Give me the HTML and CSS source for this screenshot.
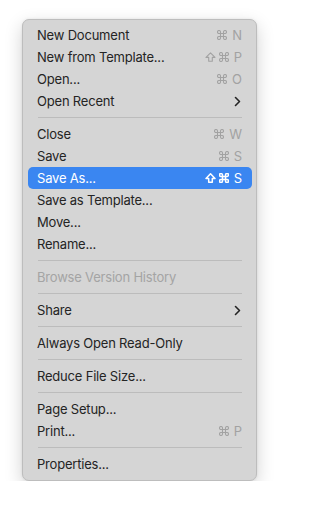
FILE: index.html
```html
<!DOCTYPE html>
<html lang="en">
<head>
<meta charset="utf-8">
<title>File menu</title>
<link rel="stylesheet" href="styles.css">
</head>
<body>
<div class="menu">
  <div class="item"><span class="label">New Document</span><span class="keys"><svg class="cmd" viewBox="0 0 10 10"><path d="M3.5 3.5 V2 A1.5 1.5 0 1 0 2 3.5 H8 A1.5 1.5 0 1 0 6.5 2 V8 A1.5 1.5 0 1 0 8 6.5 H2 A1.5 1.5 0 1 0 3.5 8 Z"/></svg><span class="l">N</span></span></div>
  <div class="item"><span class="label">New from Template...</span><span class="keys"><svg class="shift" viewBox="0 0 11 10"><path d="M5.5 0.8 L10 5.4 H7.3 V9.2 H3.7 V5.4 H1 Z"/></svg><svg class="cmd" viewBox="0 0 10 10"><path d="M3.5 3.5 V2 A1.5 1.5 0 1 0 2 3.5 H8 A1.5 1.5 0 1 0 6.5 2 V8 A1.5 1.5 0 1 0 8 6.5 H2 A1.5 1.5 0 1 0 3.5 8 Z"/></svg><span class="l">P</span></span></div>
  <div class="item"><span class="label">Open...</span><span class="keys"><svg class="cmd" viewBox="0 0 10 10"><path d="M3.5 3.5 V2 A1.5 1.5 0 1 0 2 3.5 H8 A1.5 1.5 0 1 0 6.5 2 V8 A1.5 1.5 0 1 0 8 6.5 H2 A1.5 1.5 0 1 0 3.5 8 Z"/></svg><span class="l">O</span></span></div>
  <div class="item"><span class="label">Open Recent</span><svg class="chev" width="7" height="11" viewBox="0 0 7 11"><path d="M1.5 1.5 L5.5 5.5 L1.5 9.5"/></svg></div>
  <div class="sep"></div>
  <div class="item"><span class="label">Close</span><span class="keys"><svg class="cmd" viewBox="0 0 10 10"><path d="M3.5 3.5 V2 A1.5 1.5 0 1 0 2 3.5 H8 A1.5 1.5 0 1 0 6.5 2 V8 A1.5 1.5 0 1 0 8 6.5 H2 A1.5 1.5 0 1 0 3.5 8 Z"/></svg><span class="l">W</span></span></div>
  <div class="item"><span class="label">Save</span><span class="keys"><svg class="cmd" viewBox="0 0 10 10"><path d="M3.5 3.5 V2 A1.5 1.5 0 1 0 2 3.5 H8 A1.5 1.5 0 1 0 6.5 2 V8 A1.5 1.5 0 1 0 8 6.5 H2 A1.5 1.5 0 1 0 3.5 8 Z"/></svg><span class="l">S</span></span></div>
  <div class="item active"><span class="label">Save As...</span><span class="keys"><svg class="shift" viewBox="0 0 11 10"><path d="M5.5 0.8 L10 5.4 H7.3 V9.2 H3.7 V5.4 H1 Z"/></svg><svg class="cmd" viewBox="0 0 10 10"><path d="M3.5 3.5 V2 A1.5 1.5 0 1 0 2 3.5 H8 A1.5 1.5 0 1 0 6.5 2 V8 A1.5 1.5 0 1 0 8 6.5 H2 A1.5 1.5 0 1 0 3.5 8 Z"/></svg><span class="l">S</span></span></div>
  <div class="item"><span class="label">Save as Template...</span></div>
  <div class="item"><span class="label">Move...</span></div>
  <div class="item"><span class="label">Rename...</span></div>
  <div class="sep"></div>
  <div class="item disabled"><span class="label">Browse Version History</span></div>
  <div class="sep"></div>
  <div class="item"><span class="label">Share</span><svg class="chev" width="7" height="11" viewBox="0 0 7 11"><path d="M1.5 1.5 L5.5 5.5 L1.5 9.5"/></svg></div>
  <div class="sep"></div>
  <div class="item"><span class="label">Always Open Read-Only</span></div>
  <div class="sep"></div>
  <div class="item"><span class="label">Reduce File Size...</span></div>
  <div class="sep"></div>
  <div class="item"><span class="label">Page Setup...</span></div>
  <div class="item"><span class="label">Print...</span><span class="keys"><svg class="cmd" viewBox="0 0 10 10"><path d="M3.5 3.5 V2 A1.5 1.5 0 1 0 2 3.5 H8 A1.5 1.5 0 1 0 6.5 2 V8 A1.5 1.5 0 1 0 8 6.5 H2 A1.5 1.5 0 1 0 3.5 8 Z"/></svg><span class="l">P</span></span></div>
  <div class="sep"></div>
  <div class="item"><span class="label">Properties...</span></div>
</div>
</body>
</html>
```

FILE: styles.css
```css
html, body {
  margin: 0;
  padding: 0;
  background: #ffffff;
}
body {
  padding: 19px 0 0 22px;
  font-family: Inter, "Liberation Sans", sans-serif;
}
.menu {
  width: 233px;
  box-sizing: content-box;
  background: #d5d5d5;
  border: 1px solid #bdbdbd;
  border-radius: 7px;
  padding: 4px 0 5px;
  box-shadow: 0 6px 18px rgba(0, 0, 0, 0.18), 0 0 3px rgba(0, 0, 0, 0.08);
}
.item {
  height: 22px;
  margin: 0 4px 0 5px;
  padding: 0 10px 0 9px;
  border-radius: 5px;
  display: flex;
  align-items: center;
  justify-content: space-between;
  font-size: 13px;
  color: #242424;
  letter-spacing: -0.2px;
}
.item.active {
  background: #3a86f1;
  color: #ffffff;
}
.item.disabled {
  color: #a4a4a4;
}
.keys {
  display: flex;
  align-items: center;
  color: #a2a2a2;
  font-size: 13px;
}
.item.active .keys {
  color: #ffffff;
}
.keys svg {
  display: block;
  fill: none;
  stroke: currentColor;
  stroke-width: 1.1;
  stroke-linejoin: round;
  stroke-linecap: round;
}
.shift {
  width: 11px;
  height: 10px;
  margin-right: 3px;
}
.cmd {
  width: 10px;
  height: 10px;
}
.item.active .keys svg {
  stroke-width: 1.5;
}
.l {
  margin-left: 5px;
  letter-spacing: 0;
}
.chev {
  display: block;
  margin-right: 1px;
  fill: none;
  stroke: #242424;
  stroke-width: 1.6;
  stroke-linecap: round;
  stroke-linejoin: round;
}
.sep {
  height: 1px;
  background: #bcbcbc;
  margin: 5px 14px 5px 15px;
}
```
